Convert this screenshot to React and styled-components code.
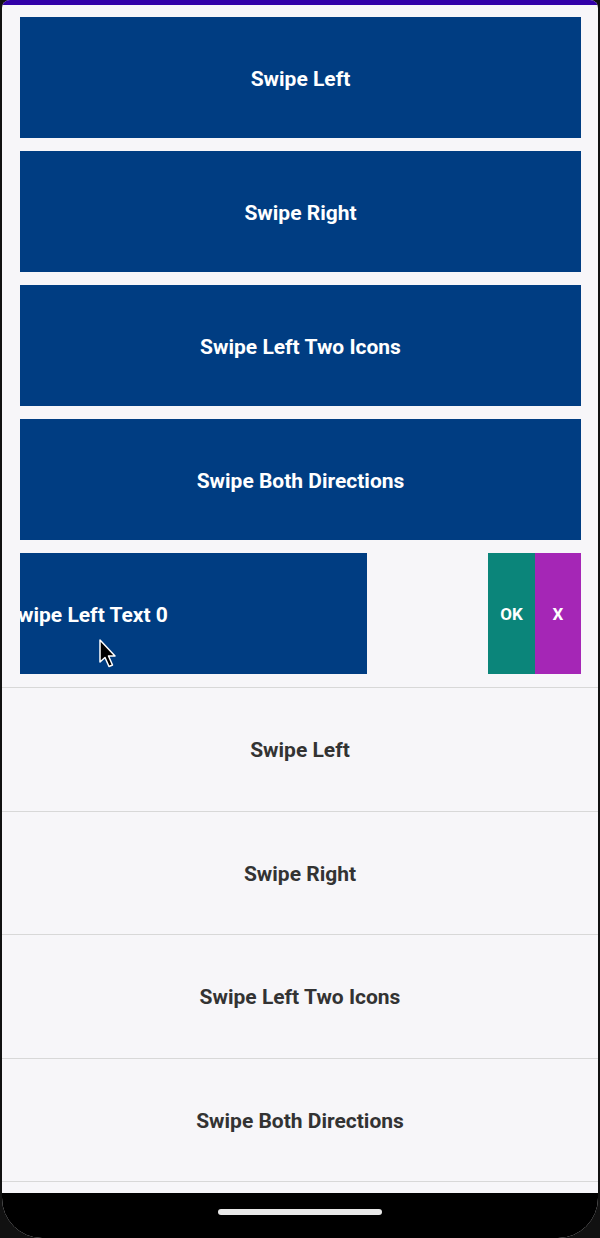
import React from 'react';
import styled, { createGlobalStyle } from 'styled-components';

const GlobalStyle = createGlobalStyle`
  html, body {
    margin: 0;
    padding: 0;
    background: #0b0b0b;
  }
  * {
    box-sizing: border-box;
  }
`;

const Frame = styled.div`
  width: 600px;
  height: 1238px;
  padding: 0 2px;
  background: #111;
  font-family: Roboto, "Liberation Sans", sans-serif;
  position: relative;
  overflow: hidden;
`;

const Screen = styled.div`
  height: 100%;
  display: flex;
  flex-direction: column;
  background: #f7f6f9;
  border-radius: 8px 8px 40px 40px;
  overflow: hidden;
`;

const StatusBar = styled.div`
  height: 5px;
  flex-shrink: 0;
  background: #3200a8;
`;

const CardList = styled.div`
  display: flex;
  flex-direction: column;
  gap: 13px;
  padding: 12px 17px 13px 18px;
`;

const Card = styled.div`
  height: 121px;
  display: flex;
  align-items: center;
  justify-content: center;
  padding-top: 2px;
  background: #003d82;
  color: #fff;
  font-size: 21px;
  font-weight: 700;
  flex-shrink: 0;
`;

const SwipeRow = styled.div`
  height: 121px;
  position: relative;
  overflow: hidden;
  flex-shrink: 0;
`;

const Actions = styled.div`
  position: absolute;
  top: 0;
  right: 0;
  bottom: 0;
  display: flex;
`;

const ActionButton = styled.div`
  width: ${p => p.w}px;
  display: flex;
  align-items: center;
  justify-content: center;
  background: ${p => p.color};
  color: #fff;
  font-size: 17px;
  font-weight: 700;
`;

const SlidingCard = styled(Card)`
  position: relative;
  height: 100%;
  transform: translateX(${p => p.offset}px);
  white-space: nowrap;
`;

const Rows = styled.div`
  display: flex;
  flex-direction: column;
  border-top: 1px solid #d8d8d8;
`;

const Row = styled.div`
  height: 123.5px;
  display: flex;
  align-items: center;
  justify-content: center;
  padding-top: 2px;
  border-bottom: 1px solid #d8d8d8;
  color: #333;
  font-size: 21px;
  font-weight: 700;
  flex-shrink: 0;
`;

const Spacer = styled.div`
  flex: 1;
`;

const NavBar = styled.div`
  height: 45px;
  flex-shrink: 0;
  background: #000;
  display: flex;
  justify-content: center;
  padding-top: 16px;
`;

const HomeIndicator = styled.div`
  width: 164px;
  height: 6px;
  border-radius: 3px;
  background: #e8e8e8;
`;

const Cursor = styled.svg`
  position: absolute;
  left: 98px;
  top: 638px;
`;

const titles = ['Swipe Left', 'Swipe Right', 'Swipe Left Two Icons', 'Swipe Both Directions'];

export default function App() {
  return (
    <>
      <GlobalStyle />
      <Frame>
        <Screen>
          <StatusBar />
          <CardList>
            {titles.map(t => (
              <Card key={t}>{t}</Card>
            ))}
            <SwipeRow>
              <Actions>
                <ActionButton w={47} color="#0b857a">OK</ActionButton>
                <ActionButton w={46} color="#a526b6">X</ActionButton>
              </Actions>
              <SlidingCard offset={-214}>Swipe Left Text 0</SlidingCard>
            </SwipeRow>
          </CardList>
          <Rows>
            {titles.map(t => (
              <Row key={t}>{t}</Row>
            ))}
          </Rows>
          <Spacer />
          <NavBar>
            <HomeIndicator />
          </NavBar>
        </Screen>
        <Cursor width="22" height="32" viewBox="0 0 22 32">
          <path
            d="M2 2 L2 24 L7 19.5 L11 28.5 L14.5 27 L10.5 18 L17 18 Z"
            fill="#000"
            stroke="#fff"
            strokeWidth="1.5"
            strokeLinejoin="round"
          />
        </Cursor>
      </Frame>
    </>
  );
}
